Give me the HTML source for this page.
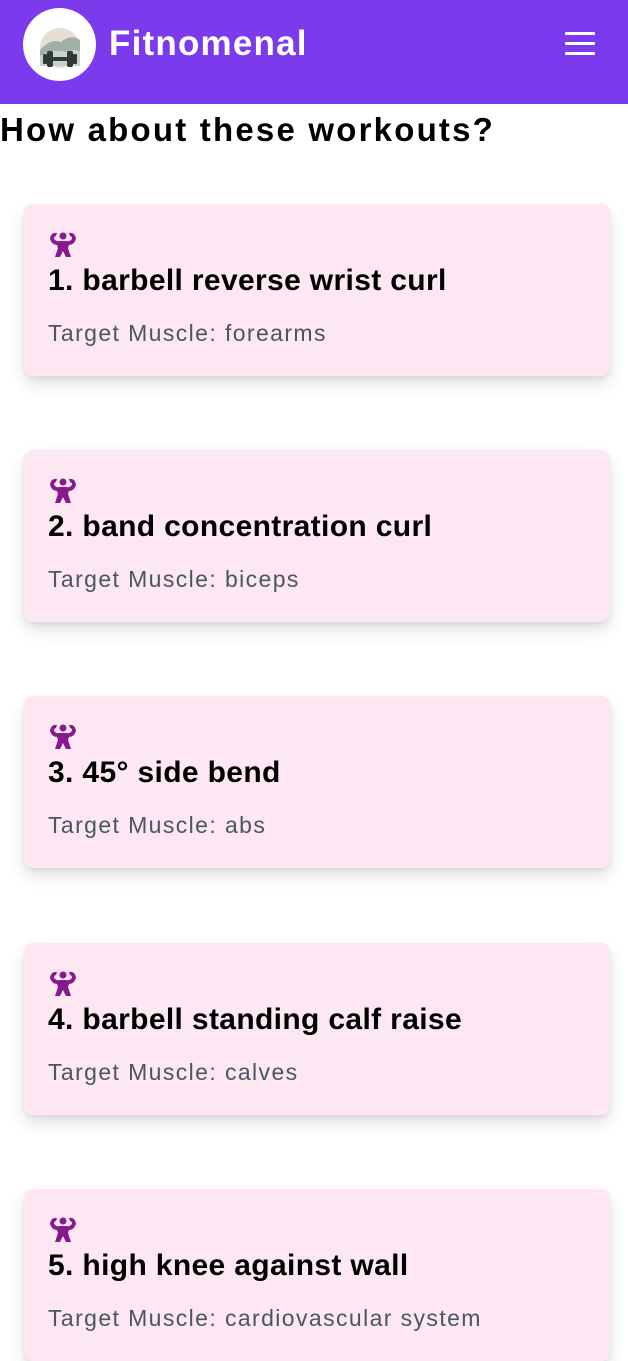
<!DOCTYPE html>
<html><head><meta charset="utf-8"><style>
*{margin:0;padding:0;box-sizing:border-box}
body{width:628px;height:1348px;overflow:hidden;background:#fff;font-family:"Liberation Sans",sans-serif;position:relative}
.hdr{position:absolute;left:0;top:0;width:628px;height:104px;background:#7c3aed}
.logo{position:absolute;left:23px;top:8px;width:73px;height:73px;border-radius:50%;background:#fff;overflow:hidden}
.brand{position:absolute;left:109px;top:22px;color:#fff;font-size:35px;font-weight:bold;line-height:44px;letter-spacing:1.2px}
.bar{position:absolute;left:565px;width:30px;height:3px;background:#fff;border-radius:1px}
h1{position:absolute;left:0;top:110px;font-size:33px;line-height:40px;font-weight:bold;color:#000;letter-spacing:2.2px}
.card{position:absolute;left:24px;width:586px;height:172px;background:#fce7f3;border-radius:9px;box-shadow:0 8px 16px rgba(0,0,0,0.12),0 2px 4px rgba(0,0,0,0.06)}
.card svg{position:absolute;left:24px;top:26px}
.t{position:absolute;left:24px;top:58px;font-size:30px;font-weight:bold;line-height:38px;color:#000;white-space:nowrap;letter-spacing:0.35px}
.s{position:absolute;left:24px;top:115px;font-size:23px;line-height:28px;color:#4b5563;white-space:nowrap;letter-spacing:1.4px}
</style></head><body>
<div class="hdr">
 <div class="logo"><svg width="73" height="73" viewBox="0 0 73 73">
  <circle cx="37" cy="40" r="20" fill="#e6ddd3"/>
  <path d="M17 42 Q28 30 38 34 Q48 26 57 32 L57 52 L17 52Z" fill="#9fb0a4"/>
  <path d="M17 48 Q30 40 44 44 Q52 40 57 44 L57 58 L17 58Z" fill="#c8d2cc"/>
  <rect x="24" y="43" width="6" height="16" rx="2" fill="#2f3a36"/><rect x="44" y="43" width="6" height="16" rx="2" fill="#2f3a36"/>
  <rect x="20" y="46" width="4" height="10" rx="1" fill="#2f3a36"/><rect x="50" y="46" width="4" height="10" rx="1" fill="#2f3a36"/>
  <rect x="30" y="49" width="14" height="4" fill="#2f3a36"/>
 </svg></div>
 <div class="brand">Fitnomenal</div>
 <div class="bar" style="top:32px"></div><div class="bar" style="top:42px"></div><div class="bar" style="top:52px"></div>
</div>
<h1>How about these workouts?</h1>
<div class="card" style="top:204px"><svg width="30" height="28" viewBox="0 0 30 28"><g fill="#86198f"><circle cx="15" cy="6" r="3.5"/><path d="M2 9 Q3 2 9 3 L8 6 Q6 6 6 9 Q9 12 11 11 L19 11 Q21 12 24 9 Q24 6 22 6 L21 3 Q27 2 28 9 Q26 15 21 15 L20 18 L23 27 L18 27 L15 21 L12 27 L7 27 L10 18 L9 15 Q4 15 2 9Z"/></g></svg><div class="t">1. barbell reverse wrist curl</div><div class="s">Target Muscle: forearms</div></div>
<div class="card" style="top:450px"><svg width="30" height="28" viewBox="0 0 30 28"><g fill="#86198f"><circle cx="15" cy="6" r="3.5"/><path d="M2 9 Q3 2 9 3 L8 6 Q6 6 6 9 Q9 12 11 11 L19 11 Q21 12 24 9 Q24 6 22 6 L21 3 Q27 2 28 9 Q26 15 21 15 L20 18 L23 27 L18 27 L15 21 L12 27 L7 27 L10 18 L9 15 Q4 15 2 9Z"/></g></svg><div class="t">2. band concentration curl</div><div class="s">Target Muscle: biceps</div></div>
<div class="card" style="top:696px"><svg width="30" height="28" viewBox="0 0 30 28"><g fill="#86198f"><circle cx="15" cy="6" r="3.5"/><path d="M2 9 Q3 2 9 3 L8 6 Q6 6 6 9 Q9 12 11 11 L19 11 Q21 12 24 9 Q24 6 22 6 L21 3 Q27 2 28 9 Q26 15 21 15 L20 18 L23 27 L18 27 L15 21 L12 27 L7 27 L10 18 L9 15 Q4 15 2 9Z"/></g></svg><div class="t">3. 45° side bend</div><div class="s">Target Muscle: abs</div></div>
<div class="card" style="top:943px"><svg width="30" height="28" viewBox="0 0 30 28"><g fill="#86198f"><circle cx="15" cy="6" r="3.5"/><path d="M2 9 Q3 2 9 3 L8 6 Q6 6 6 9 Q9 12 11 11 L19 11 Q21 12 24 9 Q24 6 22 6 L21 3 Q27 2 28 9 Q26 15 21 15 L20 18 L23 27 L18 27 L15 21 L12 27 L7 27 L10 18 L9 15 Q4 15 2 9Z"/></g></svg><div class="t">4. barbell standing calf raise</div><div class="s">Target Muscle: calves</div></div>
<div class="card" style="top:1189px"><svg width="30" height="28" viewBox="0 0 30 28"><g fill="#86198f"><circle cx="15" cy="6" r="3.5"/><path d="M2 9 Q3 2 9 3 L8 6 Q6 6 6 9 Q9 12 11 11 L19 11 Q21 12 24 9 Q24 6 22 6 L21 3 Q27 2 28 9 Q26 15 21 15 L20 18 L23 27 L18 27 L15 21 L12 27 L7 27 L10 18 L9 15 Q4 15 2 9Z"/></g></svg><div class="t">5. high knee against wall</div><div class="s">Target Muscle: cardiovascular system</div></div>
</body></html>
